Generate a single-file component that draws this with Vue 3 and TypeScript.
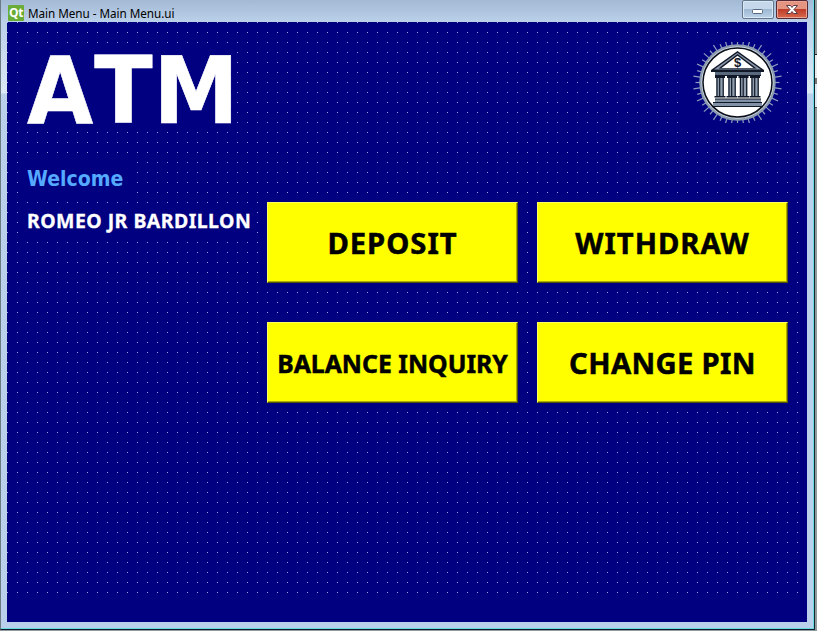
<script setup lang="ts">
interface Action { label: string; kind: string }
const actions: Action[] = [
  { label: 'DEPOSIT', kind: 'deposit' },
  { label: 'WITHDRAW', kind: 'withdraw' },
  { label: 'BALANCE INQUIRY', kind: 'balance' },
  { label: 'CHANGE PIN', kind: 'pin' },
]
const rays: number[] = Array.from({ length: 44 }, (_, i) => (i * 360) / 44)
const columns: number[] = [28, 40, 51.5, 63]
</script>

<template>
  <div class="desktop">
    <div class="window">
      <header class="titlebar">
        <span class="qt">Qt</span>
        <span class="caption">Main Menu - Main Menu.ui</span>
        <div class="controls">
          <button class="ctl min"><svg width="30" height="17"><rect x="9.5" y="8.5" width="10" height="4" rx="1" fill="#fff" stroke="#566b82" /></svg></button>
          <button class="ctl close"><svg width="30" height="17"><path d="M9.500 4.500h4l1.500 2 1.500-2h4L17 8.500l3.500 4h-4l-1.500-2-1.500 2h-4l3.500-4z" fill="#fff" stroke="#5a3a45" stroke-width="1" /></svg></button>
        </div>
      </header>
      <main class="form">
        <div class="top">
          <h1 class="title"><span>ATM</span></h1>
          <div class="logo">
            <svg width="100" height="81" viewBox="0 0 100 81">
              <g stroke="#8c9fc0" stroke-width="1.2">
                <line v-for="(r, i) in rays" :key="r" x1="50.500" :y1="i % 2 ? -1.500 : -4" x2="50.500" y2="4" :transform="`rotate(${r} 50.5 40.5)`" />
              </g>
              <circle cx="50.5" cy="40.500" r="38.300" fill="#8a9bb0" />
              <circle cx="50.5" cy="40.500" r="36.200" fill="#cdd5de" />
              <circle cx="50.5" cy="40.500" r="34.500" fill="#fff" stroke="#080d19" stroke-width="1.500" />
              <path d="M50.500 9 24 28v2h53v-2z" fill="#101827" />
              <path d="M50.500 10.700 27 27.500h47z" fill="#8997aa" />
              <path d="M50.500 12 31.500 26.500h38z" fill="#101827" />
              <path d="M50.500 13.800 34.500 26h32z" fill="#fff" />
              <path d="M28 30h46v4H28z" fill="#58687d" />
              <path d="M28 33h46v1H28z" fill="#101827" />
              <text x="50.500" y="25" text-anchor="middle" class="dollar">$</text>
              <g v-for="x in columns" :key="x">
                <rect :x="x" y="34" width="10" height="2" fill="#101827" />
                <rect :x="x + 1.2" y="36" width="7.600" height="18" fill="#8f9dae" />
                <path :d="`M${x + 2} 36v18M${x + 4.7} 36v18M${x + 8.2} 36v18`" stroke="#101827" stroke-width="1.2" />
                <rect :x="x - .5" y="54" width="11" height="1.500" fill="#101827" />
              </g>
              <path d="M28 57h46v3H28zM26 60.500h49v4H26z" fill="#8191a6" />
              <path d="M28 56.500h46v1H28zM26 60h49v1H26zM26 64h49v1H26z" fill="#101827" />
            </svg>
          </div>
        </div>
        <div class="content">
          <section class="user">
            <p class="welcome"><span>Welcome</span></p>
            <p class="name"><span>ROMEO JR BARDILLON</span></p>
          </section>
          <nav class="actions">
            <button v-for="a in actions" :key="a.kind" class="action" :class="a.kind"><span>{{ a.label }}</span></button>
          </nav>
        </div>
      </main>
    </div>
    <aside class="behind"><i class="sliver"></i></aside>
  </div>
</template>

<style>
body { overflow: hidden; }
</style>

<style scoped>
* { box-sizing: border-box; }
.desktop { width: 817px; height: 631px; display: flex; background: #919b9e; font-family: "Noto Sans", sans-serif; }
.window { flex: none; width: 815px; height: 630px; border-left: 1px solid #6c7b84; border-right: 1px solid #10252c; border-bottom: 1px solid #101c2c; box-shadow: inset -1px -1px #68dbe5; padding: 0 7px 7px 6px; background: linear-gradient(#a3bad5 0, #bbd0e9 22px, #dbe8f5 90px, #dbe8f5 93px, #b9d1ea 94px); }
.behind { width: 2px; padding-top: 54px; }
.sliver { display: block; height: 54px; border-top: 1px solid #222; border-bottom: 1px solid #555; background: linear-gradient(#e7ebee 0 23px, #777 23px 29px, #dce7f2 29px); }
.titlebar { height: 22px; display: flex; align-items: flex-start; margin: 0 -2px 0 1px; }
.qt { width: 16px; height: 16px; margin-top: 5px; background: #69ad36; color: #fff; font: bold 12px/15px "Open Sans", sans-serif; text-align: center; border-radius: 1px; letter-spacing: -.5px; }
.caption { margin: 5px 0 0 4px; font-size: 11.700px; line-height: 17px; letter-spacing: -.04px; color: #000; }
.controls { display: flex; gap: 2px; margin: 0 1px 0 auto; }
.ctl { display: grid; place-items: center; padding: 0; width: 32px; height: 19px; border: 1px solid #61758b; border-radius: 2px; box-shadow: inset 0 0 0 1px #dae7f5; background: linear-gradient(#c5d7eb 0 48%, #9fb8d2 49%, #bad3e9); }
.close { border-color: #572932; background: linear-gradient(#e59482 0 48%, #bd3c28 49%, #d86a4e); box-shadow: inset 0 0 0 1px #e8a497; }
.form { width: 800px; height: 600px; background: linear-gradient(#000080, #000080) 0 580px / 800px 20px no-repeat, conic-gradient(at 1px 1px, transparent 0 75%, #a3a3e6 75%) 0 0 / 10px 10px #000080; }
.top { display: flex; justify-content: space-between; padding: 20px 20px 0; height: 131px; }
.title { margin: 1px 0 0; width: 210px; height: 89px; background: #000080; color: #fff; font: bold 93px/97px "DejaVu Sans", sans-serif; font-kerning: none; letter-spacing: 1px; white-space: nowrap; -webkit-text-stroke: .6px #fff; }
.title span { display: inline-block; transform: scaleX(.92); transform-origin: 0 0; }
.logo { width: 100px; height: 90px; background: #000080; }
.logo svg { display: block; }
.dollar { font: bold 13px "Liberation Sans", sans-serif; fill: #101827; }
.content { display: flex; padding-left: 20px; }
.user { width: 240px; flex: none; }
.user p { margin: 0; background: #000080; font-weight: 700; white-space: nowrap; }
.user .welcome { width: 101px; height: 48px; color: #55aaff; font: bold 22px/51px "DejaVu Sans", sans-serif; }
.welcome span { display: inline-block; transform: scaleX(.86); transform-origin: 0 0; }
.user .name { margin-top: 4px; width: 229px; height: 29px; color: #fff; font-size: 19.500px; line-height: 31px; letter-spacing: .45px; -webkit-text-stroke: .3px #fff; }
.actions { display: grid; grid-template-columns: 251px 251px; grid-auto-rows: 81px; gap: 39px 19px; padding-top: 49px; }
.action { padding: 3px 0 0; border: 1px solid #ffff60; border-right: 1px solid #55550a; border-bottom: 1px solid #55550a; box-shadow: inset -1px -1px #aaaa00; background: #ff0; color: #000; font: bold 29.200px/1 "Noto Sans", sans-serif; white-space: nowrap; letter-spacing: .35px; -webkit-text-stroke: .5px #000; }
.deposit, .withdraw { letter-spacing: 1px; }
.balance { padding-top: 1px; font-size: 24.800px; letter-spacing: 0; }
</style>
